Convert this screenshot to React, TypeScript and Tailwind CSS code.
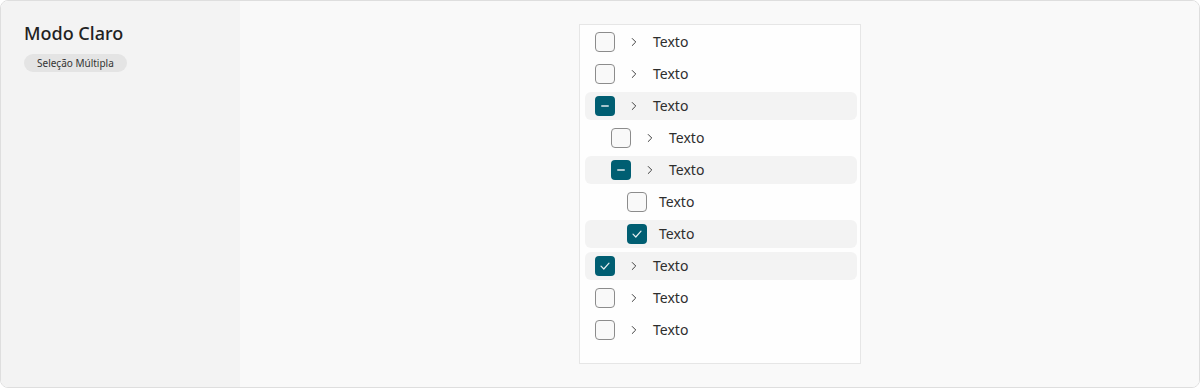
import { ChevronRight } from "lucide-react";

type CheckState = "off" | "mixed" | "on";

type Row = {
  level: number;
  state: CheckState;
  expandable: boolean;
  highlighted: boolean;
};

const rows: Row[] = [
  { level: 0, state: "off", expandable: true, highlighted: false },
  { level: 0, state: "off", expandable: true, highlighted: false },
  { level: 0, state: "mixed", expandable: true, highlighted: true },
  { level: 1, state: "off", expandable: true, highlighted: false },
  { level: 1, state: "mixed", expandable: true, highlighted: true },
  { level: 2, state: "off", expandable: false, highlighted: false },
  { level: 2, state: "on", expandable: false, highlighted: true },
  { level: 0, state: "on", expandable: true, highlighted: true },
  { level: 0, state: "off", expandable: true, highlighted: false },
  { level: 0, state: "off", expandable: true, highlighted: false },
];

const indent = ["pl-[10px]", "pl-[26px]", "pl-[42px]"];

function Checkbox({ state }: { state: CheckState }) {
  if (state === "off") {
    return (
      <span className="w-5 h-5 shrink-0 rounded-[4px] border border-[#8c8c8c] bg-[#f9f9f9]" />
    );
  }
  return (
    <span className="w-5 h-5 shrink-0 rounded-[4px] bg-[#005e72] flex items-center justify-center">
      {state === "mixed" ? (
        <span className="w-2 h-[2px] rounded-full bg-[#a6c5cc]" />
      ) : (
        <svg width="12" height="12" viewBox="0 0 12 12" fill="none">
          <path
            d="M2 6.2 L4.8 9 L10 3.2"
            stroke="#e6eff1"
            strokeWidth="1.2"
            strokeLinecap="round"
            strokeLinejoin="round"
          />
        </svg>
      )}
    </span>
  );
}

export default function App() {
  return (
    <div className="w-[1200px] h-[388px] flex overflow-hidden rounded-[8px] border border-[#dedede] font-['Noto_Sans',sans-serif] text-[#2b2b2b]">
      {/* Sidebar */}
      <aside className="w-[239px] shrink-0 bg-[#f3f3f3] pl-[23px] pt-[20px]">
        <h1 className="text-[18px] leading-[24px] font-medium text-[#222]">Modo Claro</h1>
        <span className="inline-block mt-[9px] h-[18px] leading-[18px] px-[13px] rounded-full bg-[#e4e4e4] text-[10px] text-[#333]">
          Seleção Múltipla
        </span>
      </aside>

      {/* Main */}
      <main className="flex-1 bg-[#f9f9f9] pt-[23px] pl-[339px]">
        <div className="w-[282px] h-[340px] bg-[#fefefe] border border-[#e6e6e6] px-[5px] pt-[3px] pr-[3px]">
          <div className="flex flex-col gap-1">
            {rows.map((r, i) => (
              <div
                key={i}
                className={`h-7 flex items-center gap-3 rounded-[6px] ${indent[r.level]} ${
                  r.highlighted ? "bg-[#f3f3f3]" : ""
                }`}
              >
                <Checkbox state={r.state} />
                {r.expandable && (
                  <ChevronRight className="w-[14px] h-[14px] shrink-0 text-[#333]" strokeWidth={1.6} />
                )}
                <span className="text-[14px] leading-5 text-[#2e2e2e]">Texto</span>
              </div>
            ))}
          </div>
        </div>
      </main>
    </div>
  );
}
